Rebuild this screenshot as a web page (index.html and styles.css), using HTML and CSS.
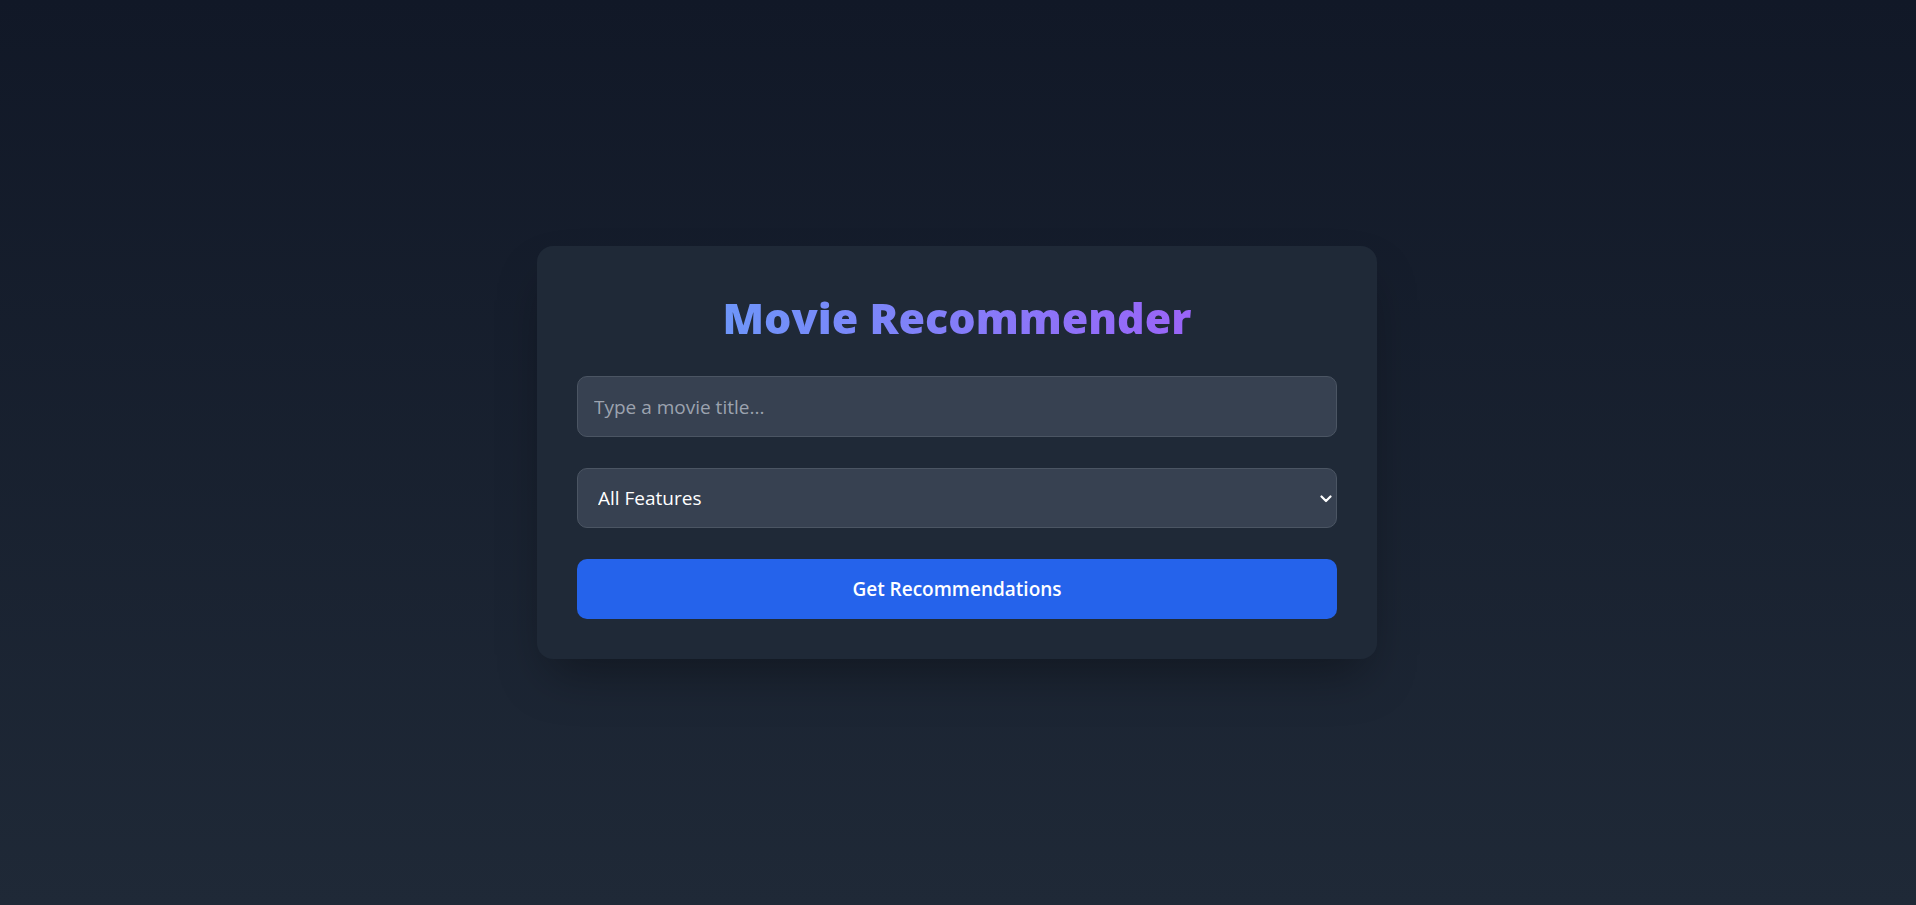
FILE: index.html
```html
<!DOCTYPE html>
<html lang="en">
<head>
<meta charset="utf-8">
<title>Movie Recommender</title>
<link rel="stylesheet" href="styles.css">
</head>
<body>
<main class="page">
  <section class="card">
    <h1 class="title">Movie Recommender</h1>
    <form class="form">
      <input class="field" type="text" placeholder="Type a movie title...">
      <div class="select-wrap">
        <select class="field select">
          <option>All Features</option>
          <option>Genres</option>
          <option>Cast</option>
          <option>Director</option>
          <option>Keywords</option>
        </select>
        <svg class="chevron" width="12" height="8" viewBox="0 0 12 8" aria-hidden="true"><path d="M1.5 1.5 L6 6 L10.5 1.5" fill="none" stroke="#ffffff" stroke-width="2.2" stroke-linecap="round" stroke-linejoin="round"/></svg>
      </div>
      <button class="btn" type="button">Get Recommendations</button>
    </form>
  </section>
</main>
</body>
</html>
```
FILE: styles.css
```css
* { box-sizing: border-box; }
html, body { margin: 0; padding: 0; }
body {
  font-family: "Open Sans", "Noto Sans", "Liberation Sans", sans-serif;
  background: linear-gradient(to bottom, #111827, #1f2937);
  min-height: 100vh;
  color: #ffffff;
}
.page {
  min-height: 100vh;
  display: flex;
  align-items: center;
  justify-content: center;
  padding-right: 2px;
}
.card {
  width: 840px;
  padding: 40px;
  background: #1f2937;
  border-radius: 16px;
  box-shadow: 0 25px 50px -12px rgba(0, 0, 0, 0.35);
}
.title {
  margin: 0 0 26px;
  text-align: center;
  font-size: 43px;
  font-weight: 800;
  line-height: 64px;
  background: linear-gradient(to right, #60a5fa, #a855f7);
  -webkit-background-clip: text;
  background-clip: text;
  color: transparent;
}
.form {
  display: flex;
  flex-direction: column;
  gap: 31px;
}
.field {
  display: block;
  width: 100%;
  height: 61px;
  padding: 0 16px;
  font-family: inherit;
  font-size: 19px;
  color: #ffffff;
  background: #374151;
  border: 1px solid #4b5563;
  border-radius: 10px;
  outline: none;
}
.field::placeholder { color: #9ca3af; }
.select-wrap { position: relative; }
.select {
  height: 60px;
  padding: 0 20px;
  appearance: none;
  -webkit-appearance: none;
}
.chevron {
  position: absolute;
  right: 5px;
  top: 27px;
  pointer-events: none;
}
.btn {
  display: block;
  width: 100%;
  height: 60px;
  font-family: inherit;
  font-size: 19px;
  font-weight: 600;
  color: #ffffff;
  background: #2563eb;
  border: none;
  border-radius: 10px;
  cursor: pointer;
}
```
